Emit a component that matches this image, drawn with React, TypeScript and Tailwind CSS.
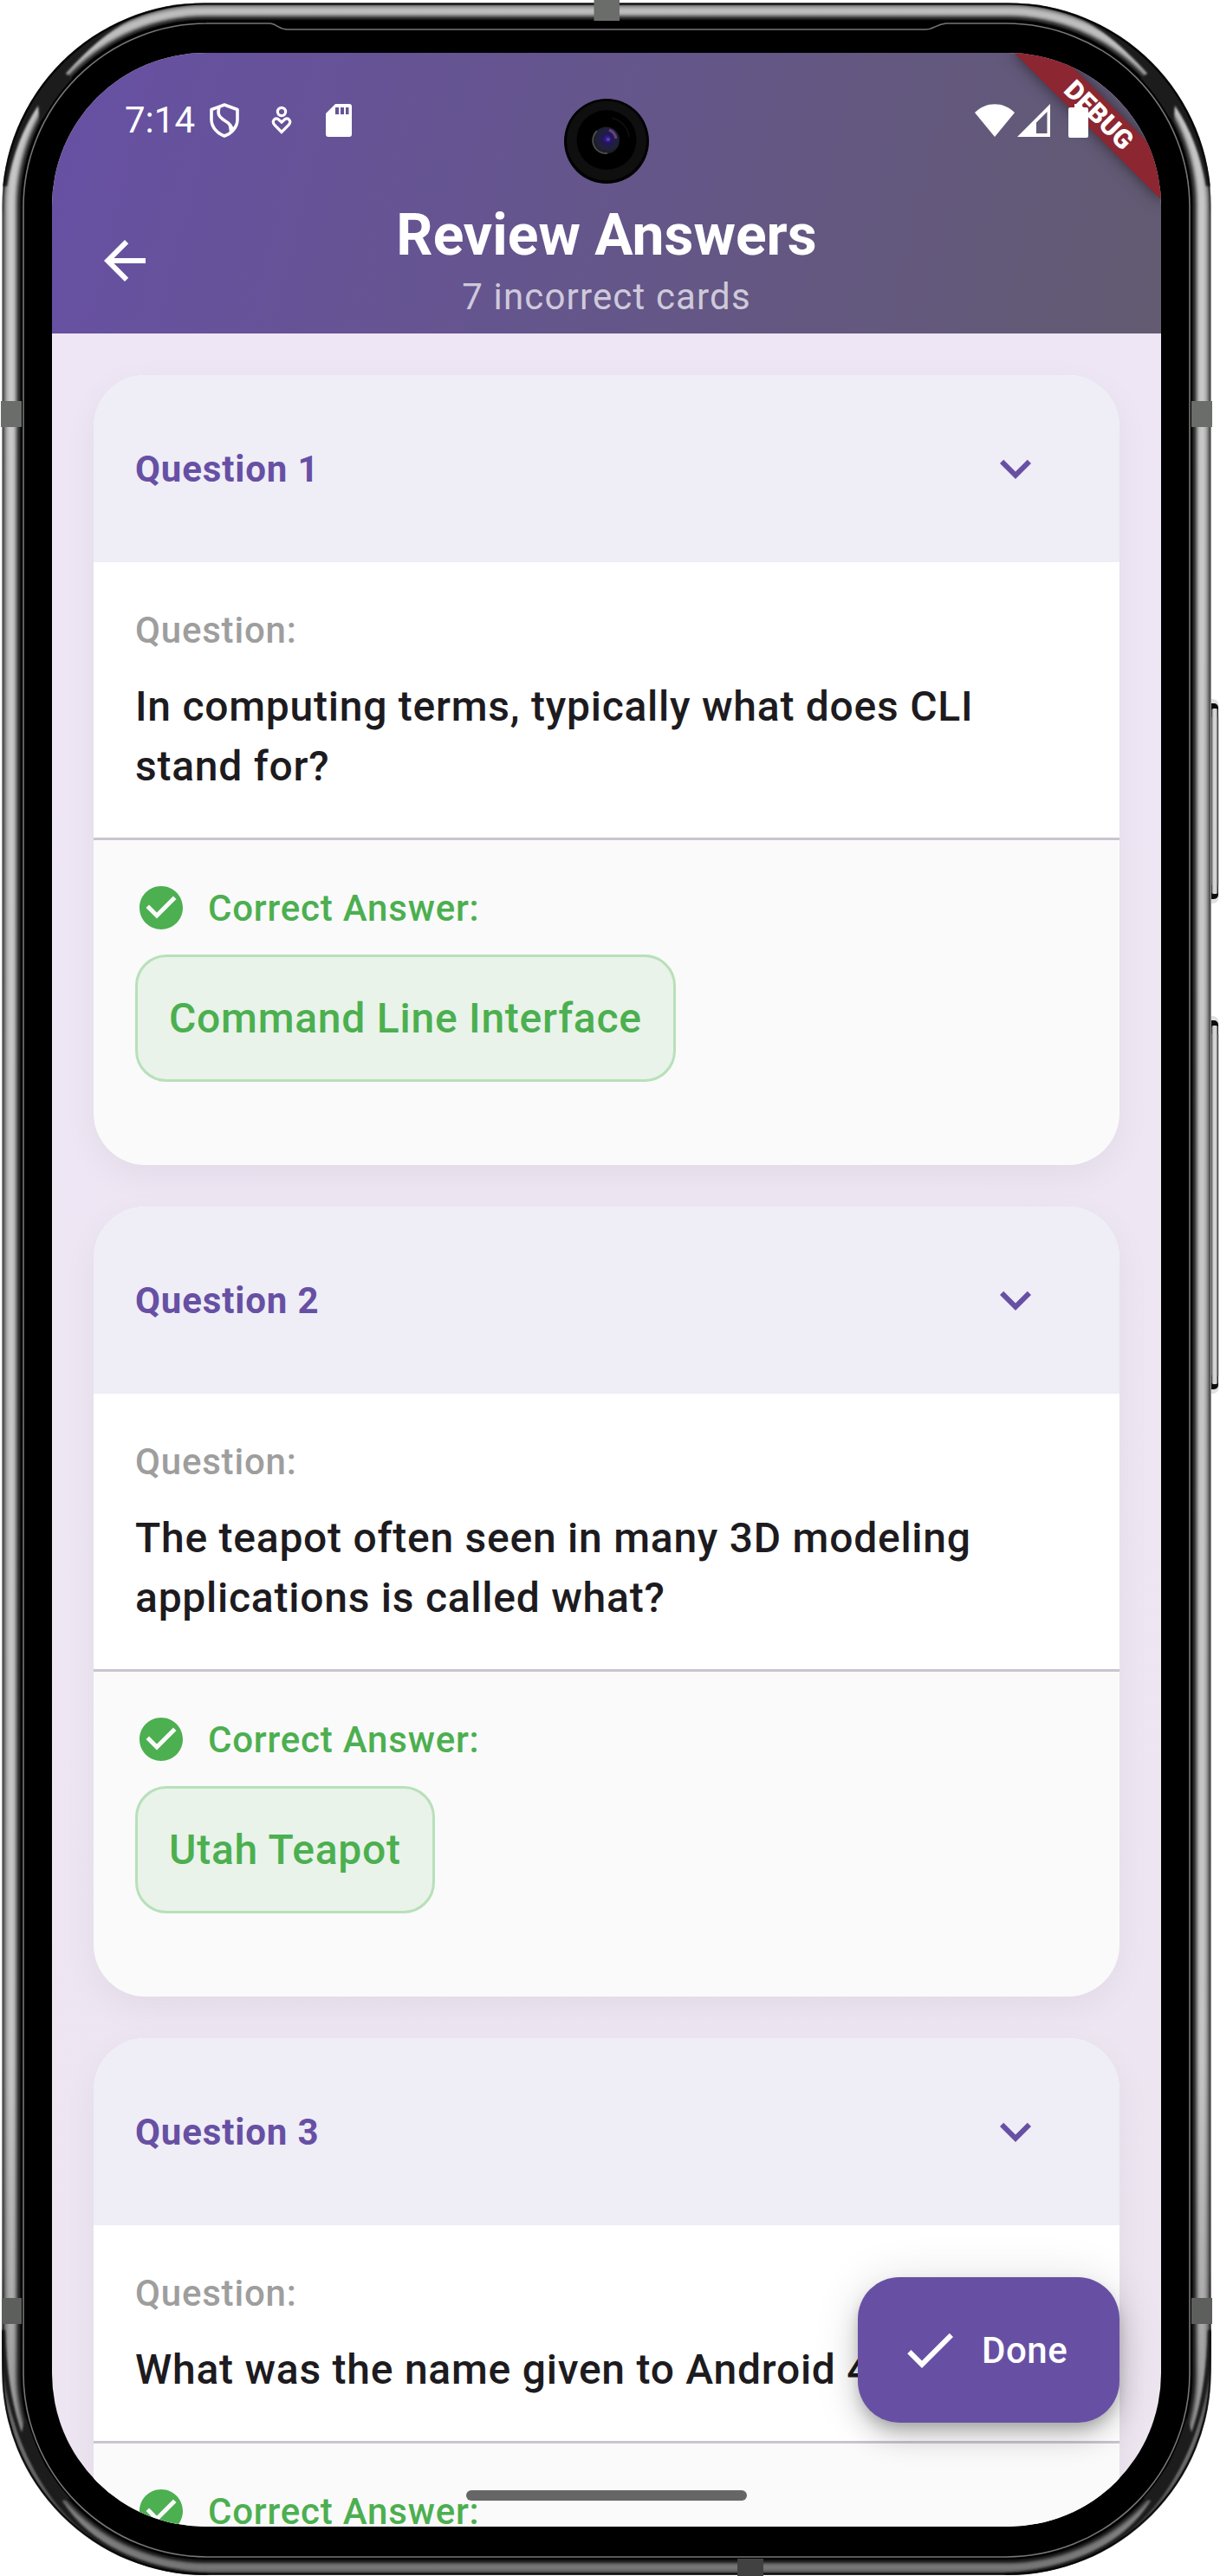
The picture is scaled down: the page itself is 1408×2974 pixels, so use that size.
import React from "react";

type Card = { id: number; lines: string[]; answer?: string };

const cards: Card[] = [
  { id: 1, lines: ["In computing terms, typically what does CLI", "stand for?"], answer: "Command Line Interface" },
  { id: 2, lines: ["The teapot often seen in many 3D modeling", "applications is called what?"], answer: "Utah Teapot" },
  { id: 3, lines: ["What was the name given to Android 4.3?"] },
];

// Metal rim tones, from the outer edge towards the bezel.
const rim = [
  "#9a9a9a", "#5a5a5a", "#606060", "#787878", "#8c8c8c", "#a0a0a0", "#afafaf", "#b9b9b9",
  "#c1c1c1", "#c6c6c6", "#c8c8c8", "#c8c8c8", "#c5c5c5", "#bebebe", "#b2b2b2", "#9c9c9c",
  "#828282", "#686868", "#4a4a4a", "#363636", "#2a2a2a", "#161616", "#050505", "#000000",
];

function CornerShade() {
  return (
    <g filter="url(#soft)">
      <path d="M215 2 C95 6 4 100 0 215 L8 215 Q17 162 44 122 L46 140 L64 120 L90 94 L76 85 Q116 40 150 23 Q182 9 215 5 Z" fill="#1f1f1f" />
      <path d="M0 2690 C0 2830 80 2974 240 2976 L240 2971 Q118 2961 72 2887 L82 2884 L52 2846 L30 2790 L25 2808 Q8 2760 6 2690 Z" fill="#1f1f1f" />
    </g>
  );
}

function PhoneFrame() {
  return (
    <svg className="absolute inset-0" width="1408" height="2974" viewBox="0 0 1408 2974">
      <defs>
        <filter id="soft" x="-20%" y="-20%" width="140%" height="140%">
          <feGaussianBlur stdDeviation="1.2" />
        </filter>
        <linearGradient id="dim" x1="0" y1="0" x2="0" y2="1">
          <stop offset="0" stopColor="#000" stopOpacity="0.06" />
          <stop offset="0.08" stopColor="#000" stopOpacity="0" />
          <stop offset="0.8" stopColor="#000" stopOpacity="0.02" />
          <stop offset="0.9" stopColor="#000" stopOpacity="0.15" />
          <stop offset="1" stopColor="#000" stopOpacity="0.42" />
        </linearGradient>
        <linearGradient id="edge" gradientUnits="userSpaceOnUse" x1="0" y1="0" x2="0" y2="2974">
          <stop offset="0" stopColor="#000" stopOpacity="0.9" />
          <stop offset="0.05" stopColor="#000" stopOpacity="0.8" />
          <stop offset="0.085" stopColor="#000" stopOpacity="0.1" />
          <stop offset="0.88" stopColor="#000" stopOpacity="0.1" />
          <stop offset="0.94" stopColor="#000" stopOpacity="0.8" />
          <stop offset="1" stopColor="#000" stopOpacity="0.8" />
        </linearGradient>
        <linearGradient id="key" x1="0" y1="0" x2="1" y2="0">
          <stop offset="0" stopColor="#777" />
          <stop offset="0.25" stopColor="#ccc" />
          <stop offset="0.65" stopColor="#dcdcdc" />
          <stop offset="0.85" stopColor="#999" />
          <stop offset="1" stopColor="#444" />
        </linearGradient>
        <clipPath id="body">
          <rect x="2" y="3" width="1396" height="2970" rx="235" />
        </clipPath>
        <radialGradient id="lens" cx="0.55" cy="0.45" r="0.55">
          <stop offset="0" stopColor="#3c28a8" />
          <stop offset="0.3" stopColor="#261558" />
          <stop offset="0.7" stopColor="#1e2236" />
          <stop offset="1" stopColor="#1b1b1f" />
        </radialGradient>
      </defs>
      {[[812, 1038], [1178, 1604]].map(([a, b]) => (
        <g key={a}>
          <rect x="1392" y={a - 5} width="14.5" height={b - a + 10} rx="7" fill="#bbb" opacity="0.45" />
          <rect x="1392" y={a} width="14" height={b - a} rx="5" fill="#0c0c0c" />
          <rect x="1392" y={a + 16} width="14.2" height={b - a - 32} fill="#4a4a4a" />
          <rect x="1398.500" y={a + 6} width="7" height={b - a - 12} rx="2" fill="url(#key)" />
        </g>
      ))}
      <g clipPath="url(#body)">
        {rim.map((c, i) => {
          const t = i / (rim.length - 1);
          return (
            <rect
              key={i}
              x={2 + 23 * t}
              y={3 + 21 * t}
              width={1396 - 46 * t}
              height={2970 - 40 * t}
              rx={235 - 22 * t}
              fill={c}
            />
          );
        })}
        <rect width="1408" height="2974" fill="url(#dim)" />
        <CornerShade />
        <g transform="translate(1400 0) scale(-1 1)">
          <CornerShade />
        </g>
      </g>
      <rect x="3.5" y="4.5" width="1393" height="2967" rx="233.5" fill="none" stroke="url(#edge)" strokeWidth="2" />
      <g fill="#6a6d6a">
        <rect x="685.5" y="0" width="29.5" height="25" />
        <rect x="851" y="2953" width="30" height="21" fill="#414141" />
        <rect x="1" y="463" width="24" height="30" />
        <rect x="1375" y="463" width="24" height="30" />
        <rect x="2" y="2653" width="23" height="30" fill="#5c5f5c" />
        <rect x="1375" y="2653" width="24" height="30" fill="#5c5f5c" />
      </g>
      <rect x="25" y="24" width="1350" height="2930" rx="213" fill="#000" />
      <path
        d="M238 27 H312 C320 28 322 34 332 34 H1068 C1078 34 1080 28 1092 27 H1161 A212 212 0 0 1 1373 239 V2740 A212 212 0 0 1 1161 2952 H239 A212 212 0 0 1 27 2740 V239 A212 212 0 0 1 239 27"
        fill="none"
        stroke="#767676"
        strokeWidth="1.6"
      />
    </svg>
  );
}

function Camera() {
  return (
    <svg className="absolute left-[591px] top-[53px]" width="98" height="98" viewBox="0 0 98 98">
      <circle cx="49" cy="49" r="49" fill="#000" />
      <circle cx="49" cy="48.5" r="46" fill="#0f0f0f" />
      <circle cx="49" cy="47.5" r="34.5" fill="#000" />
      <path d="M55 22 A26 26 0 0 1 75 44" fill="none" stroke="#101014" strokeWidth="1.5" />
      <circle cx="48.5" cy="48" r="15.5" fill="url(#lens)" />
      <path d="M38 37 A15 15 0 0 0 50 63" fill="none" stroke="#5c5c5c" strokeWidth="1.8" opacity="0.8" />
      <path d="M52 36 A13 13 0 0 1 60 46" fill="none" stroke="#7b4c96" strokeWidth="3" opacity="0.75" />
      <circle cx="51" cy="47" r="2" fill="#5a45d8" opacity="0.8" />
    </svg>
  );
}

function StatusBar() {
  return (
    <div className="absolute left-0 top-0 z-20 flex h-[156px] w-full items-center text-white">
      <span className="ml-[84px] w-[98px] text-[42px] leading-[60px]">7:14</span>
      <svg width="34" height="40" viewBox="0 0 34 40" fill="none" stroke="white" strokeWidth="3.6" strokeLinejoin="round">
        <path d="M17 2 L32 7.5 V19 C32 27.5 25.5 35 17 38 C8.5 35 2 27.5 2 19 V7.5 Z" />
        <path d="M11 5 C8.500 13 11 16 17 20 C24 24 26 27 25 34" />
        <path d="M21 22 L28 28 L23 34 Z" fill="white" stroke="none" />
      </svg>
      <svg className="ml-[37px]" width="24" height="34" viewBox="0 0 24 34" fill="none" stroke="white" strokeWidth="3.2">
        <circle cx="12" cy="7" r="4.600" />
        <path d="M12 30.500 L4 22.500 C0 18 4 13.500 8 15.500 L12 19 L16 15.500 C20 13.500 24 18 20 22.500 Z" />
      </svg>
      <svg className="ml-[39px]" width="30" height="38" viewBox="0 0 30 38">
        <path fill="white" fillRule="evenodd" d="M11 0 H27 A3 3 0 0 1 30 3 V35 A3 3 0 0 1 27 38 H3 A3 3 0 0 1 0 35 V11 Z M11 4 V12 H15 V4 Z M17 4 V12 H21 V4 Z M23 4 V12 H26.500 V4 Z" />
      </svg>
      <svg className="ml-auto" width="46" height="38" viewBox="0 0 46 38">
        <path fill="white" d="M23 38 L0 10 C13 -3 33 -3 46 10 Z" />
      </svg>
      <svg className="ml-[3px]" width="38" height="38" viewBox="0 0 38 38">
        <path fill="white" fillRule="evenodd" d="M38 0 V38 H0 Z M34.500 9 L22 21.500 V34 H34.500 Z" />
      </svg>
      <svg className="ml-[21px] mr-[84px]" width="23" height="39" viewBox="0 0 23 39">
        <path fill="white" d="M7 0 H16 V4 H21 A2 2 0 0 1 23 6 V37 A2 2 0 0 1 21 39 H2 A2 2 0 0 1 0 37 V6 A2 2 0 0 1 2 4 H7 Z" />
      </svg>
    </div>
  );
}

function ReviewCard({ card }: { card: Card }) {
  return (
    <section className="shrink-0 overflow-hidden rounded-[60px] bg-[#fafafa]">
      <div className="flex h-[216px] items-center justify-between bg-[#efedf6] px-[48px]">
        <h2 className="-mb-[2px] text-[42px] font-bold leading-[60px] tracking-[0.85px] text-[#6750a4]">Question {card.id}</h2>
        <button className="flex size-[144px] items-center justify-center">
          <svg width="72" height="72" viewBox="0 0 24 24" fill="#6750a4">
            <path d="M16.590 8.590 12 13.170 7.410 8.590 6 10l6 6 6-6z" />
          </svg>
        </button>
      </div>
      <div className="border-b-[3px] border-[#cac4d0] bg-white p-[48px]">
        <p className="mb-[23px] pt-px text-[42px] font-medium leading-[60px] tracking-[0.8px] text-[#9e9e9e]">Question:</p>
        {card.lines.map((l) => (
          <p key={l} className="whitespace-nowrap text-[48px] font-medium leading-[69px] tracking-[0.75px] text-[#1d1b20]">{l}</p>
        ))}
      </div>
      <div className="px-[48px] pb-[96px] pt-[48px] text-[#4caf50]">
        <div className="flex h-[60px] items-center gap-[24px]">
          <svg width="60" height="60" viewBox="0 0 24 24" fill="#4caf50">
            <path d="M12 2C6.480 2 2 6.480 2 12s4.480 10 10 10 10-4.480 10-10S17.520 2 12 2zm-2 15-5-5 1.410-1.410L10 14.170l7.590-7.590L19 8l-9 9z" />
          </svg>
          <span className="-mb-[2px] text-[42px] font-medium leading-[60px] tracking-[0.8px]">Correct Answer:</span>
        </div>
        {card.answer && (
          <div className="mt-[24px] w-fit rounded-[36px] border-[3px] border-[#b8e0ba] bg-[#e9f3e9] p-[36px] text-[48px] font-medium leading-[69px] tracking-[0.75px]">
            {card.answer}
          </div>
        )}
      </div>
    </section>
  );
}

export default function App() {
  return (
    <div className="relative h-[2974px] w-[1408px] overflow-hidden bg-white pl-[60px] pt-[61px] font-['Roboto',sans-serif]">
      <PhoneFrame />
      <main className="relative flex h-[2856px] w-[1280px] flex-col overflow-hidden rounded-[177px] bg-[linear-gradient(160deg,#eee6f5,#ede6f1)]">
        <header className="flex h-[324px] shrink-0 items-center bg-[linear-gradient(104.2deg,#6750a4,#625b71)] pb-[12px] pt-[168px] text-white">
          <button className="ml-[12px] flex size-[144px] items-center justify-center">
            <svg width="72" height="72" viewBox="0 0 24 24" fill="white">
              <path d="M20 11H7.830l5.590-5.590L12 4l-8 8 8 8 1.410-1.410L7.830 13H20v-2z" />
            </svg>
          </button>
          <div className="mr-[156px] flex-1 pt-px text-center">
            <h1 className="text-[66px] font-bold leading-[84px]">Review Answers</h1>
            <p className="-mt-px text-[42px] leading-[60px] tracking-[1.15px] text-white/70">7 incorrect cards</p>
          </div>
        </header>
        <div className="flex min-h-0 flex-1 flex-col gap-[48px] overflow-hidden px-[48px] pt-[48px]">
          {cards.map((c) => (
            <div key={c.id} className="shrink-0 rounded-[60px] shadow-[0_12px_40px_rgba(0,0,0,0.05)]">
              <ReviewCard card={c} />
            </div>
          ))}
        </div>

        <div className="absolute right-[-47.900px] top-[54.100px] z-10 flex h-[36px] w-[240px] rotate-45 items-center justify-center bg-[#8c2630] text-[30.600px] font-black leading-none text-white shadow-[0_0_18px_rgba(0,0,0,0.5)]">
          DEBUG
        </div>
        <StatusBar />
        <Camera />

        <button className="absolute bottom-[120px] right-[48px] flex h-[168px] w-[302px] items-center gap-[24px] rounded-[48px] bg-[#6750a4] pl-[47px] text-[42px] font-medium leading-[60px] tracking-[0.500px] text-white shadow-[0_9px_15px_-3px_rgba(0,0,0,0.2),0_18px_30px_rgba(0,0,0,0.14),0_3px_54px_rgba(0,0,0,0.12)]">
          <svg width="72" height="72" viewBox="0 0 24 24" fill="white">
            <path d="M9 16.170 4.830 12l-1.420 1.410L9 19 21 7l-1.410-1.410z" />
          </svg>
          <span className="-mb-[2px]">Done</span>
        </button>
        <div className="absolute bottom-[30px] left-[478px] h-[12px] w-[324px] rounded-full bg-[#666666]" />
      </main>
    </div>
  );
}
